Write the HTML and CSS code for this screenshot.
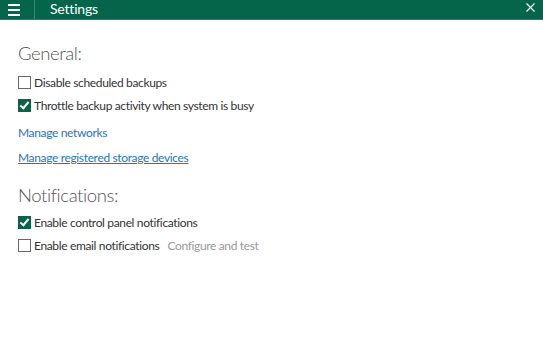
FILE: index.html
```html
<!DOCTYPE html>
<html>
  <head>
    <meta charset="utf-8" />
    <title>Settings</title>
    <link rel="stylesheet" href="styles.css">
  </head>
  <body>
    <div class="titlebar">
      <div class="hamburger">
        <div class="hamburger-line"></div>
        <div class="hamburger-line"></div>
        <div class="hamburger-line"></div>
      </div>
      <div class="title">Settings</div>
      <div class="close">
        <svg width="9" height="9" viewBox="0 0 9 9">
          <path d="M0.5 0.5 L8.5 8.5 M8.5 0.5 L0.5 8.5" stroke="#fff" stroke-width="1.2" />
        </svg>
      </div>
    </div>

    <div class="content">
      <h2 class="section">General:</h2>
      <label class="option"><span class="box"></span>Disable scheduled backups</label>
      <label class="option"><span class="box checked"></span>Throttle backup activity when system is busy</label>
      <div class="link-row first"><a href="#">Manage networks</a></div>
      <div class="link-row"><a href="#" class="underlined">Manage registered storage devices</a></div>

      <h2 class="section notifications">Notifications:</h2>
      <label class="option"><span class="box checked"></span>Enable control panel notifications</label>
      <label class="option"><span class="box"></span>Enable email notifications<span class="muted">Configure and test</span></label>
    </div>
  </body>
</html>
```

FILE: styles.css
```css
body {
  margin: 0;
  padding: 0;
  background: #fff;
  font-family: Lato, "Open Sans", sans-serif;
  color: #333;
}

.titlebar {
  display: flex;
  align-items: center;
  height: 19px;
  background: #05654a;
  border-bottom: 1px solid #2f7d62;
  color: #fff;
}

.hamburger {
  display: flex;
  flex-direction: column;
  gap: 3px;
  width: 26px;
  padding: 0 0 0 8px;
  height: 19px;
  justify-content: center;
  border-right: 1px solid #3e8a70;
}

.hamburger-line {
  width: 12px;
  height: 2px;
  background: #fff;
}

.title {
  flex: 1;
  padding-left: 15px;
  font-size: 14px;
  line-height: 17px;
  letter-spacing: -0.2px;
  margin-top: -2px;
}

.close {
  display: flex;
  width: 9px;
  height: 9px;
  margin-right: 8px;
  margin-top: -4px;
}

.content {
  padding: 0 18px;
}

.section {
  margin: 21px 0 6px;
  font-size: 18.5px;
  font-weight: 300;
  line-height: 24px;
  letter-spacing: -0.4px;
  color: #555;
}

.section.notifications {
  margin: 13px 0 4px;
}

.option {
  display: flex;
  align-items: center;
  height: 23px;
  font-size: 12px;
  letter-spacing: -0.35px;
  color: #333;
}

.box {
  width: 11px;
  height: 11px;
  border: 1px solid #666;
  margin-right: 3px;
  position: relative;
}

.box.checked {
  background: #0b6347;
  border-color: #0b6347;
}

.box.checked::after {
  content: "";
  position: absolute;
  left: 3px;
  top: 0px;
  width: 3px;
  height: 7px;
  border: solid #fff;
  border-width: 0 2px 2px 0;
  transform: rotate(40deg);
}

.muted {
  margin-left: 8px;
  color: #999;
}

.link-row {
  height: 25px;
  display: flex;
  align-items: center;
  font-size: 12px;
  letter-spacing: -0.35px;
}

.link-row.first {
  margin-top: 3px;
}

a {
  color: #2a74b8;
  text-decoration: none;
}

a.underlined {
  text-decoration: underline;
}
```
